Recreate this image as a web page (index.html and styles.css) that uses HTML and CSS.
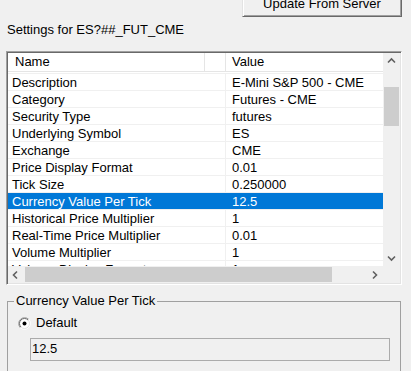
FILE: index.html
```html
<!DOCTYPE html>
<html>
<head>
    <meta charset="UTF-8">
    <meta name="viewport" content="width=device-width, initial-scale=1.0">
    <title>Symbol Settings</title>
    <link rel="stylesheet" href="styles.css">
</head>
<body>
    <div class="toolbar">
        <button class="btn">Update From Server</button>
    </div>
    <div class="caption">Settings for ES?##_FUT_CME</div>

    <div class="listbox">
        <div class="list">
            <div class="header">
                <div class="hcell name">Name</div>
                <div class="hcell gap"></div>
                <div class="hcell value">Value</div>
            </div>
            <div class="rows">
                <div class="row"><div class="cell name">Description</div><div class="cell value">E-Mini S&amp;P 500 - CME</div></div>
                <div class="row"><div class="cell name">Category</div><div class="cell value">Futures - CME</div></div>
                <div class="row"><div class="cell name">Security Type</div><div class="cell value">futures</div></div>
                <div class="row"><div class="cell name">Underlying Symbol</div><div class="cell value">ES</div></div>
                <div class="row"><div class="cell name">Exchange</div><div class="cell value">CME</div></div>
                <div class="row"><div class="cell name">Price Display Format</div><div class="cell value">0.01</div></div>
                <div class="row"><div class="cell name">Tick Size</div><div class="cell value">0.250000</div></div>
                <div class="row selected"><div class="cell name">Currency Value Per Tick</div><div class="cell value">12.5</div></div>
                <div class="row"><div class="cell name">Historical Price Multiplier</div><div class="cell value">1</div></div>
                <div class="row"><div class="cell name">Real-Time Price Multiplier</div><div class="cell value">0.01</div></div>
                <div class="row"><div class="cell name">Volume Multiplier</div><div class="cell value">1</div></div>
                <div class="row"><div class="cell name">Volume Display Format</div><div class="cell value">1</div></div>
            </div>
        </div>
        <div class="vscroll">
            <div class="arrow">
                <svg width="17" height="17" viewBox="0 0 17 17"><path d="M5 9.5 L8.5 6 L12 9.5" fill="none" stroke="#606060" stroke-width="1.6"/></svg>
            </div>
            <div class="vtrack"><div class="vthumb"></div></div>
            <div class="arrow">
                <svg width="17" height="17" viewBox="0 0 17 17"><path d="M5 7.5 L8.5 11 L12 7.5" fill="none" stroke="#606060" stroke-width="1.6"/></svg>
            </div>
        </div>
        <div class="hscroll">
            <div class="arrow">
                <svg width="17" height="17" viewBox="0 0 17 17"><path d="M9 5.5 L5.5 9 L9 12.5" fill="none" stroke="#606060" stroke-width="1.6"/></svg>
            </div>
            <div class="htrack"><div class="hthumb"></div></div>
            <div class="arrow">
                <svg width="17" height="17" viewBox="0 0 17 17"><path d="M7 5.5 L10.5 9 L7 12.5" fill="none" stroke="#606060" stroke-width="1.6"/></svg>
            </div>
        </div>
        <div class="corner"></div>
    </div>

    <fieldset class="group">
        <legend>Currency Value Per Tick</legend>
        <label class="radio">
            <svg width="13" height="13" viewBox="0 0 13 13">
                <circle cx="6.5" cy="6.5" r="5.5" fill="#fff"/>
                <path d="M2.26 10.74 A6 6 0 0 1 10.74 2.26" fill="none" stroke="#a0a0a0"/>
                <path d="M10.74 2.26 A6 6 0 0 1 2.26 10.74" fill="none" stroke="#fff"/>
                <path d="M2.96 10.04 A5 5 0 0 1 10.04 2.96" fill="none" stroke="#696969"/>
                <path d="M10.04 2.96 A5 5 0 0 1 2.96 10.04" fill="none" stroke="#e3e3e3"/>
                <circle cx="6.5" cy="6.5" r="2" fill="#000"/>
            </svg>
            <span>Default</span>
        </label>
        <div class="field">12.5</div>
    </fieldset>
</body>
</html>
```

FILE: styles.css
```css
html {
    overflow: hidden;
}
body {
    margin: 0;
    background: #f0f0f0;
    font-family: "Liberation Sans", Arial, sans-serif;
    font-size: 13px;
    color: #000;
}
.toolbar {
    display: flex;
    justify-content: flex-end;
    height: 17px;
    padding-right: 9px;
}
.btn {
    margin-top: -6px;
    width: 160px;
    height: 23px;
    padding: 0 0 3px;
    font: inherit;
    line-height: 16px;
    color: #000;
    background: #f0f0f0;
    border: 1px solid;
    border-color: #e3e3e3 #696969 #696969 #e3e3e3;
    box-shadow: inset 1px 1px #fff, inset -1px -1px #a0a0a0;
}
.caption {
    margin-top: 5px;
    padding-left: 7px;
    line-height: 15px;
}

/* list view */
.listbox {
    margin: 14px 9px 0 6px;
    height: 234px;
    box-sizing: border-box;
    padding: 1px;
    border: 1px solid;
    border-color: #a0a0a0 #fff #fff #a0a0a0;
    box-shadow: inset 1px 1px #696969, inset -1px -1px #e3e3e3;
    display: grid;
    grid-template-columns: 1fr 17px;
    grid-template-rows: 1fr 17px;
}
.list {
    background: #fff;
    overflow: hidden;
}
.header {
    display: flex;
    height: 18px;
    line-height: 18px;
    border-bottom: 1px solid #e5e5e5;
    margin-bottom: 1px;
}
.hcell.name {
    width: 189px;
    padding-left: 7px;
    border-right: 1px solid #e5e5e5;
}
.hcell.gap {
    width: 20px;
    border-right: 1px solid #e5e5e5;
}
.hcell.value {
    padding-left: 6px;
}
.rows {
    border-top: 1px solid #f0f0f0;
}
.row {
    display: flex;
    height: 16px;
    line-height: 18px;
    border-bottom: 1px solid #f0f0f0;
    white-space: nowrap;
}
.cell.name {
    width: 213px;
    padding-left: 4px;
    border-right: 1px solid #f0f0f0;
}
.cell.value {
    padding-left: 6px;
}
.row.selected {
    background: #0078d7;
    color: #fff;
}
.row.selected .cell.name {
    border-right-color: #0078d7;
}

/* scrollbars */
.vscroll {
    display: flex;
    flex-direction: column;
    background: #f0f0f0;
}
.arrow {
    flex: none;
    width: 17px;
    height: 17px;
}
.arrow svg {
    display: block;
}
.vtrack {
    flex: 1;
}
.vthumb {
    margin: 17px 1px 0;
    height: 39px;
    background: #cdcdcd;
}
.hscroll {
    display: flex;
    background: #f0f0f0;
}
.htrack {
    flex: 1;
    display: flex;
}
.hthumb {
    width: 307px;
    margin: 1px 0;
    background: #cdcdcd;
}
.corner {
    background: #f0f0f0;
}

/* group box */
.group {
    margin: 8px 10px 0 7px;
    padding: 0 10px 30px 6px;
    border: 1px solid #a0a0a0;
    min-width: 0;
}
.group legend {
    padding: 0 2px;
    line-height: 16px;
}
.radio {
    display: flex;
    margin: 6px 0 0 4px;
    line-height: 15px;
}
.radio svg {
    margin: 2px 5px 0 0;
}
.field {
    margin: 8px 0 0 16px;
    height: 21px;
    line-height: 20px;
    padding-left: 1px;
    border: 1px solid #ababab;
    background: #f0f0f0;
}
```
